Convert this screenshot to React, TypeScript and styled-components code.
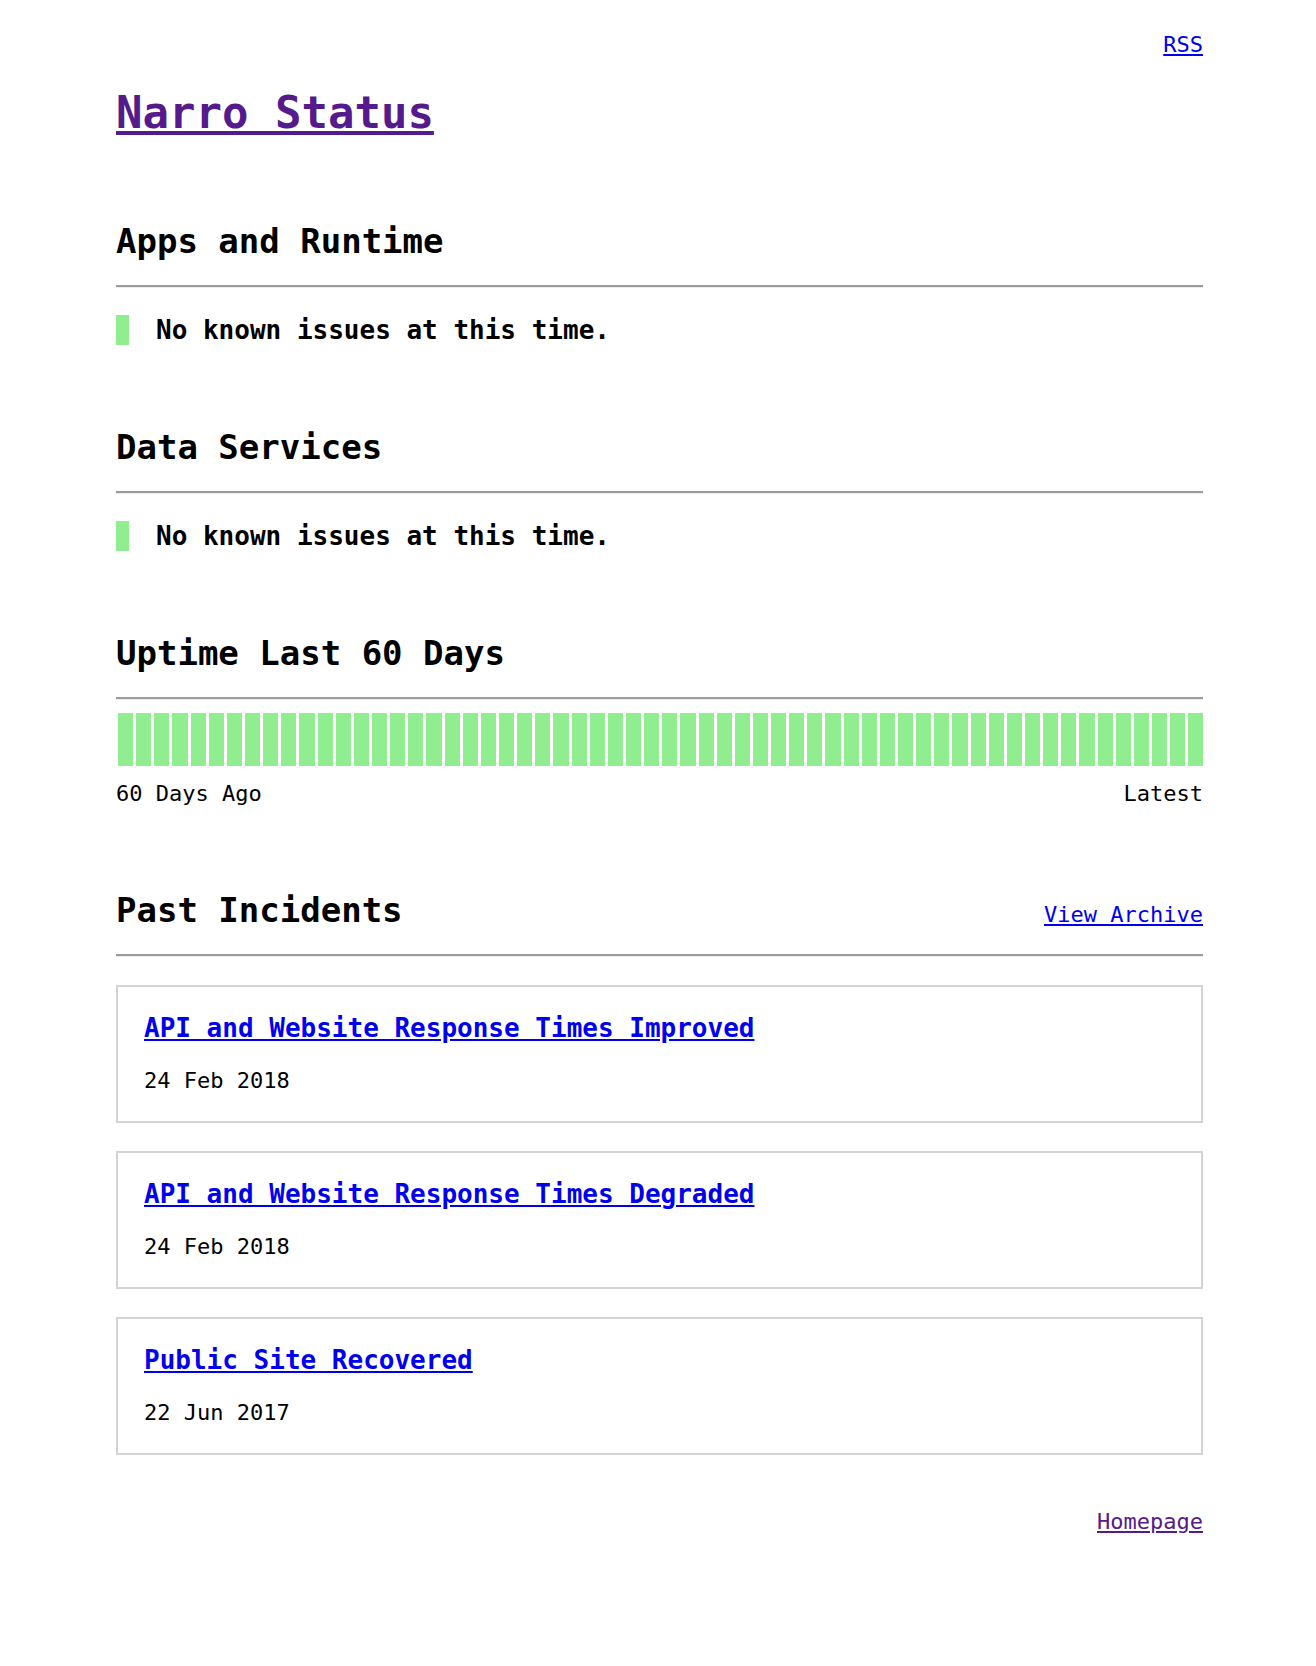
import React from "react";
import styled, { createGlobalStyle } from "styled-components";

const GlobalStyle = createGlobalStyle`
  html, body {
    margin: 0;
    padding: 0;
    background: #ffffff;
  }
  body {
    font-family: "DejaVu Sans Mono", "Liberation Mono", monospace;
    font-size: 22px;
    color: #000000;
  }
`;

const Page = styled.div`
  padding: 32px 113px 130px 116px;
  box-sizing: border-box;
  display: flex;
  flex-direction: column;
`;

const TopBar = styled.div`
  display: flex;
  justify-content: flex-end;
  line-height: 26px;
`;

const Link = styled.a<{ $visited?: boolean; $bold?: boolean }>`
  color: ${(p) => (p.$visited ? "#551a8b" : "#0000ee")};
  font-weight: ${(p) => (p.$bold ? 700 : 400)};
  text-decoration: underline;
`;

const Title = styled.h1`
  margin: 29px 0 0;
  font-size: 44px;
  line-height: 52px;
  font-weight: 700;
`;

const Section = styled.section<{ $gap?: number }>`
  margin-top: ${(p) => p.$gap ?? 82}px;
  display: flex;
  flex-direction: column;
`;

const SectionHead = styled.div`
  display: flex;
  justify-content: space-between;
  align-items: baseline;
`;

const Heading = styled.h2`
  margin: 0;
  font-size: 34px;
  line-height: 40px;
  font-weight: 700;
`;

const Rule = styled.hr`
  margin: 24px 0 0;
  height: 0;
  border: none;
  border-top: 2px solid #9b9b9b;
  border-bottom: 1px solid #ececec;
`;

const StatusRow = styled.div`
  margin-top: 27px;
  display: flex;
  align-items: center;
  gap: 27px;
  height: 30px;
`;

const StatusDot = styled.span<{ $color: string }>`
  width: 13px;
  height: 30px;
  background: ${(p) => p.$color};
  flex: none;
`;

const StatusText = styled.span`
  font-size: 26px;
  font-weight: 700;
  line-height: 30px;
`;

const Bars = styled.div`
  margin-top: 13px;
  display: flex;
  gap: 3px;
  padding-left: 2px;
  height: 53px;
`;

const Bar = styled.div<{ $color: string }>`
  flex: 1;
  background: ${(p) => p.$color};
`;

const BarLabels = styled.div`
  margin-top: 15px;
  display: flex;
  justify-content: space-between;
  line-height: 26px;
`;

const Cards = styled.div`
  margin-top: 28px;
  display: flex;
  flex-direction: column;
  gap: 28px;
`;

const Card = styled.article`
  border: 2px solid #d3d3d3;
  padding: 26px 26px 27px;
  display: flex;
  flex-direction: column;
  align-items: flex-start;
`;

const CardTitle = styled.div`
  font-size: 26px;
  line-height: 30px;
`;

const CardDate = styled.div`
  margin-top: 25px;
  line-height: 26px;
`;

const Footer = styled.div`
  margin-top: 54px;
  display: flex;
  justify-content: flex-end;
  line-height: 26px;
`;

const GREEN = "#90ee90";

const incidents = [
  { title: "API and Website Response Times Improved", date: "24 Feb 2018" },
  { title: "API and Website Response Times Degraded", date: "24 Feb 2018" },
  { title: "Public Site Recovered", date: "22 Jun 2017" },
];

const groups = ["Apps and Runtime", "Data Services"];

export default function App() {
  return (
    <>
      <GlobalStyle />
      <Page>
        <TopBar>
          <Link href="#">RSS</Link>
        </TopBar>
        <Title>
          <Link href="#" $visited $bold>
            Narro Status
          </Link>
        </Title>

        {groups.map((g) => (
          <Section key={g}>
            <Heading>{g}</Heading>
            <Rule />
            <StatusRow>
              <StatusDot $color={GREEN} />
              <StatusText>No known issues at this time.</StatusText>
            </StatusRow>
          </Section>
        ))}

        <Section>
          <Heading>Uptime Last 60 Days</Heading>
          <Rule />
          <Bars>
            {Array.from({ length: 60 }).map((_, i) => (
              <Bar key={i} $color={GREEN} />
            ))}
          </Bars>
          <BarLabels>
            <span>60 Days Ago</span>
            <span>Latest</span>
          </BarLabels>
        </Section>

        <Section $gap={83}>
          <SectionHead>
            <Heading>Past Incidents</Heading>
            <Link href="#">View Archive</Link>
          </SectionHead>
          <Rule />
          <Cards>
            {incidents.map((inc, i) => (
              <Card key={i}>
                <CardTitle>
                  <Link href="#" $bold>
                    {inc.title}
                  </Link>
                </CardTitle>
                <CardDate>{inc.date}</CardDate>
              </Card>
            ))}
          </Cards>
        </Section>

        <Footer>
          <Link href="#" $visited>
            Homepage
          </Link>
        </Footer>
      </Page>
    </>
  );
}
